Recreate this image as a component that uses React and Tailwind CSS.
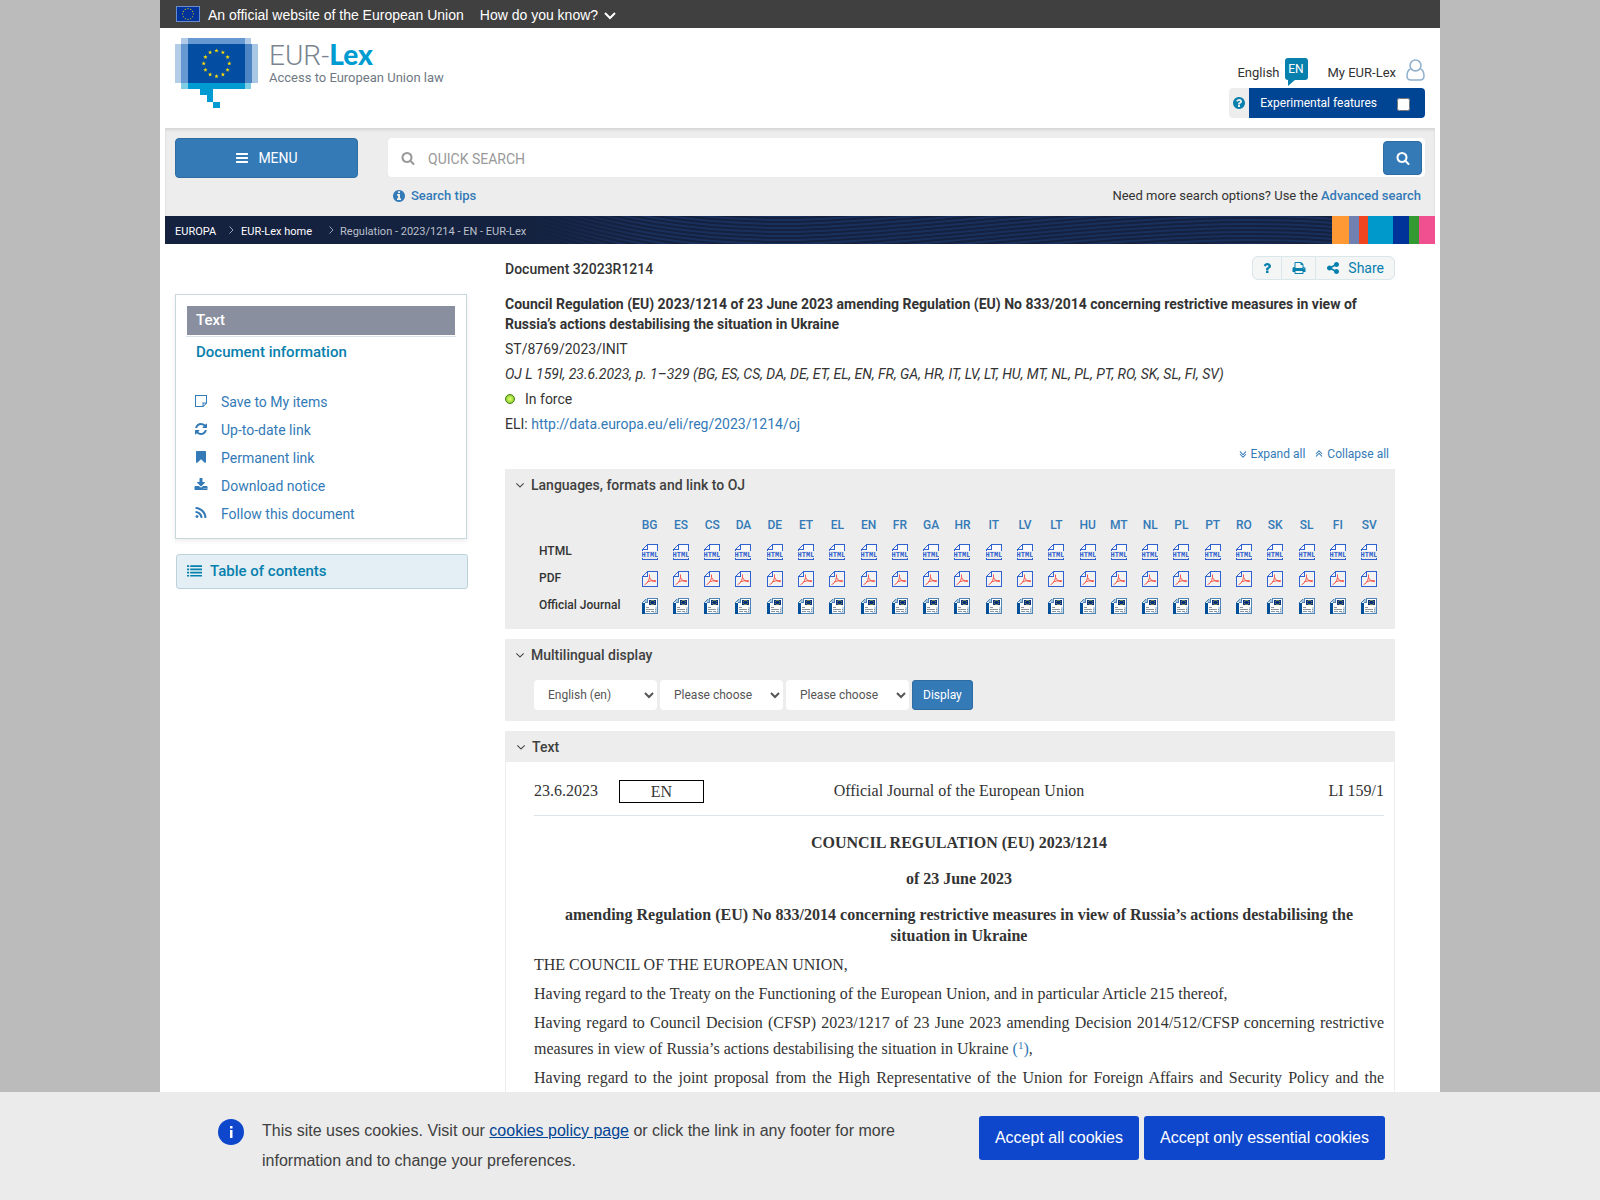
import React from 'react';

const LANGS = ['BG', 'ES', 'CS', 'DA', 'DE', 'ET', 'EL', 'EN', 'FR', 'GA', 'HR', 'IT', 'LV', 'LT', 'HU', 'MT', 'NL', 'PL', 'PT', 'RO', 'SK', 'SL', 'FI', 'SV'];

const DISC = 'm640 416q0 209-103 385.5t-279.5 279.5-385.5 103-385.5-103-279.5-279.5-103-385.5 103-385.5 279.5-279.5 385.5-103 385.5 103 279.5 279.5 103 385.5z';
const ANGLE_DOWN = 'M1395 736q0 13-10 23l-466 466q-10 10-23 10t-23-10l-466-466q-10-10-10-23t10-23l50-50q10-10 23-10t23 10l393 393 393-393q10-10 23-10t23 10l50 50q10 10 10 23z';

const PATHS = {
  bars: 'M1664 1344v128q0 26-19 45t-45 19h-1408q-26 0-45-19t-19-45v-128q0-26 19-45t45-19h1408q26 0 45 19t19 45zm0-512v128q0 26-19 45t-45 19h-1408q-26 0-45-19t-19-45v-128q0-26 19-45t45-19h1408q26 0 45 19t19 45zm0-512v128q0 26-19 45t-45 19h-1408q-26 0-45-19t-19-45v-128q0-26 19-45t45-19h1408q26 0 45 19t19 45z',
  search: 'M1216 832q0-185-131.5-316.5t-316.5-131.5-316.5 131.5-131.5 316.5 131.5 316.5 316.5 131.5 316.5-131.5 131.5-316.5zm512 832q0 52-38 90t-90 38q-54 0-90-38l-343-342q-179 124-399 124-143 0-273.5-55.5t-225-150-150-225-55.5-273.5 55.5-273.5 150-225 225-150 273.5-55.5 273.5 55.5 225 150 150 225 55.5 273.5q0 220-124 399l343 343q37 37 37 90z',
  info: 'M1152 1376v-160q0-14-9-23t-23-9h-96v-512q0-14-9-23t-23-9h-320q-14 0-23 9t-9 23v160q0 14 9 23t23 9h96v320h-96q-14 0-23 9t-9 23v160q0 14 9 23t23 9h448q14 0 23-9t9-23zm-128-896v-160q0-14-9-23t-23-9h-192q-14 0-23 9t-9 23v160q0 14 9 23t23 9h192q14 0 23-9t9-23z' + DISC,
  help: 'M1024 1376v-192q0-14-9-23t-23-9h-192q-14 0-23 9t-9 23v192q0 14 9 23t23 9h192q14 0 23-9t9-23zm256-672q0-88-55.5-163t-138.5-116-170-41q-243 0-371 213-15 24 8 42l132 100q7 6 19 6 16 0 25-12 53-68 86-92 34-24 86-24 48 0 85.5 26t37.5 59q0 38-20 61t-68 45q-63 28-115.5 86.5t-52.5 125.5v36q0 14 9 23t23 9h192q14 0 23-9t9-23q0-19 21.5-49.5t54.5-49.5q32-18 49-28.5t46-35 44.5-48 28-60.5 12.5-81zm384 192q0 209-103 385.5t-279.5 279.5-385.5 103-385.5-103-279.5-279.5-103-385.5 103-385.5 279.5-279.5 385.5-103 385.5 103 279.5 279.5 103 385.5z',
  refresh: 'M1639 1056q0 5-1 7-64 268-268 434.5t-478 166.5q-146 0-282.5-55t-243.5-157l-129 129q-19 19-45 19t-45-19-19-45v-448q0-26 19-45t45-19h448q26 0 45 19t19 45-19 45l-137 137q71 66 161 102t187 36q134 0 250-65t186-179q11-17 53-117 8-23 30-23h192q13 0 22.5 9.5t9.5 22.5zm25-800v448q0 26-19 45t-45 19h-448q-26 0-45-19t-19-45 19-45l138-138q-148-137-349-137-134 0-250 65t-186 179q-11 17-53 117-8 23-30 23h-199q-13 0-22.5-9.5t-9.5-22.5v-7q65-268 270-434.5t480-166.5q146 0 284 55.5t245 156.5l130-129q19-19 45-19t45 19 19 45z',
  bookmark: 'M1420 128q23 0 44 9 33 13 52.5 41t19.5 62v1289q0 34-19.5 62t-52.5 41q-19 8-44 8-48 0-83-32l-441-424-441 424q-36 33-83 33-23 0-44-9-33-13-52.5-41t-19.5-62v-1289q0-34 19.5-62t52.5-41q21-9 44-9h1048z',
  download: 'M1344 1344q0-26-19-45t-45-19-45 19-19 45 19 45 45 19 45-19 19-45zm256 0q0-26-19-45t-45-19-45 19-19 45 19 45 45 19 45-19 19-45zm128-224v320q0 40-28 68t-68 28h-1472q-40 0-68-28t-28-68v-320q0-40 28-68t68-28h465l135 136q58 56 136 56t136-56l136-136h464q40 0 68 28t28 68zm-325-569q17 41-14 70l-448 448q-18 19-45 19t-45-19l-448-448q-31-29-14-70 17-39 59-39h256v-448q0-26 19-45t45-19h256q26 0 45 19t19 45v448h256q42 0 59 39z',
  rss: 'M576 1344q0 80-56 136t-136 56-136-56-56-136 56-136 136-56 136 56 56 136zm512 123q2 28-17 48-18 21-47 21h-135q-25 0-43-16.5t-20-41.5q-22-229-184.5-391.5t-391.5-184.5q-25-2-41.5-20t-16.5-43v-135q0-29 21-47 17-17 43-17h5q160 13 306 80.5t259 181.5q114 113 181.5 259t80.5 306zm512 2q2 27-18 47-18 20-46 20h-143q-26 0-44.5-17.5t-19.5-42.5q-12-215-101-408.5t-231.5-336-336-231.5-408.5-102q-25-1-42.5-19.5t-17.5-43.5v-143q0-28 20-46 18-18 44-18h3q262 13 501.5 120t425.5 294q187 186 294 425.5t120 501.5z',
  share: 'M1344 1024q133 0 226.5 93.5t93.5 226.5-93.5 226.5-226.5 93.5-226.5-93.5-93.5-226.5q0-12 2-34l-360-180q-92 86-218 86-133 0-226.5-93.5t-93.5-226.5 93.5-226.5 226.5-93.5q126 0 218 86l360-180q-2-22-2-34 0-133 93.5-226.5t226.5-93.5 226.5 93.5 93.5 226.5-93.5 226.5-226.5 93.5q-126 0-218-86l-360 180q2 22 2 34t-2 34l360 180q92-86 218-86z',
  print: 'M448 1536h896v-256h-896v256zm0-640h896v-384h-160q-40 0-68-28t-28-68v-160h-640v640zm1152 64q0-26-19-45t-45-19-45 19-19 45 19 45 45 19 45-19 19-45zm128 0v416q0 13-9.5 22.5t-22.5 9.5h-224v160q0 40-28 68t-68 28h-960q-40 0-68-28t-28-68v-160h-224q-13 0-22.5-9.5t-9.5-22.5v-416q0-79 56.5-135.5t135.5-56.5h64v-544q0-40 28-68t68-28h672q40 0 88 20t76 48l152 152q28 28 48 76t20 88v256h64q79 0 135.5 56.5t56.5 135.5z',
  question: 'M1088 1256v240q0 16-12 28t-28 12h-240q-16 0-28-12t-12-28v-240q0-16 12-28t28-12h240q16 0 28 12t12 28zm316-600q0 54-15.5 101t-35 76.5-55 59.5-57.5 43.5-61 35.5q-41 23-68.5 65t-27.5 67q0 17-12 32.5t-28 15.5h-240q-15 0-25.5-18.5t-10.5-37.5v-45q0-83 65-156.5t143-108.5q59-27 84-56t25-76q0-42-46.5-74t-107.5-32q-65 0-108 29-35 25-107 115-13 16-31 16-12 0-25-8l-164-125q-13-10-15.5-25t5.5-28q160-266 464-266 80 0 161 31t146 83 106 127.5 41 158.5z',
  list: 'M0 1312h256v192h-256zm0-384h256v192h-256zm0-384h256v192h-256zm0-384h256v192h-256zm384 1152h1408v192h-1408zm0-384h1408v192h-1408zm0-384h1408v192h-1408zm0-384h1408v192h-1408z',
  note: 'M128 128h1536v1060l-476 476h-1060zm128 128v1280h832v-448h448v-832zm960 960v270l270-270z',
};

const Icon = ({ name, className = 'size-[14px]' }) => (
  <svg viewBox="0 0 1792 1792" fill="currentColor" className={`shrink-0 ${className}`} aria-hidden="true">
    <path fillRule="evenodd" d={PATHS[name]} />
  </svg>
);

const AngleDown = () => (
  <svg viewBox="0 0 1792 1792" fill="currentColor" className="size-[14px] shrink-0" aria-hidden="true">
    <path d={ANGLE_DOWN} />
  </svg>
);

const DoubleAngle = ({ up }) => (
  <svg viewBox="0 0 1792 1792" fill="currentColor" className={`size-3 shrink-0 ${up ? 'rotate-180' : ''}`} aria-hidden="true">
    <path d={ANGLE_DOWN} transform="translate(0 -160)" />
    <path d={ANGLE_DOWN} transform="translate(0 224)" />
  </svg>
);

// Ring of twelve stars, shared by the flag and the logo
const Stars = ({ cx, cy, r, size }) =>
  Array.from({ length: 12 }, (_, i) => {
    const a = (i * Math.PI) / 6;
    const x = cx + r * Math.sin(a);
    const y = cy - r * Math.cos(a);
    const pts = Array.from({ length: 10 }, (_, k) => {
      const b = (k * Math.PI) / 5;
      const s = k % 2 ? size * 0.4 : size;
      return `${x + s * Math.sin(b)},${y - s * Math.cos(b)}`;
    });
    return <polygon key={i} points={pts.join(' ')} fill="#ffdd00" />;
  });

const Logo = () => (
  <svg viewBox="0 0 83 70" className="h-[70px] w-[83px]" aria-hidden="true">
    <path fill="#b3cde8" d="M0 6h6v39H0z" />
    <path fill="#a7c7e5" d="M77 6h6v39h-6z" />
    <path fill="#b0cae7" d="M6 0h7v6H6zM70 0h6v6h-6z" />
    <path fill="#6699d2" d="M13 0h57v6H13zM6 6h7v39H6z" />
    <path fill="#4d85c5" d="M70 6h7v39h-7z" />
    <path fill="#034ea2" d="M13 6h57v39H13z" />
    <path fill="#80cde6" d="M6 45h7v6H6zM70 45h6v6h-6z" />
    <path fill="#009bd0" d="M13 45h57v6H13zM25 51h13v13h-6v-7h-7zM38 64h7v6h-7z" />
    <Stars cx={41.5} cy={25.5} r={12.8} size={2.3} />
  </svg>
);

const Flag = () => (
  <svg viewBox="0 0 24 16" className="h-4 w-6" aria-hidden="true">
    <rect width="24" height="16" fill="#6b8ccc" />
    <rect x="1" y="1" width="22" height="14" fill="#003399" />
    <Stars cx={12} cy={8} r={5.4} size={0.9} />
  </svg>
);

const HtmlIcon = () => (
  <svg viewBox="0 0 16 16" className="mx-auto block size-4" shapeRendering="crispEdges" aria-hidden="true">
    <path fill="#fafafa" d="M5 1h10v6H1V5z" />
    <path fill="#2f62cf" d="M5 0h11v7h-1V1H6v5H0v-1h5zM0 6h1v1H0zM2 3h1v1H2zM3 2h1v1H3zM1 4h1v1H1zM4 1h1v1H4zM0 14h1v1h14v-1h1v2H0z" />
    <text x="8" y="13" textAnchor="middle" fontSize="7" fontWeight="700" fill="#2f62cf" fontFamily="Liberation Mono, monospace">HTML</text>
  </svg>
);

const PdfIcon = () => (
  <svg viewBox="0 0 16 16" className="mx-auto block size-4" aria-hidden="true">
    <path fill="#f3f3f3" d="M5 1h10v14H1V5z" />
    <path fill="#2f62cf" shapeRendering="crispEdges" d="M5 0h11v16H0V5h1v10h14V1H6v5H1V5h4zM1 4h1v1H1zM2 3h1v1H2zM3 2h1v1H3zM4 1h1v1H4z" />
    <path fill="none" stroke="#f4564a" d="M7.500 3.500v3q-.5 3-2.500 5.500l-2.500 1.800M7.700 6.500q1 2.500 2.500 3.200M5.500 10.800q3-1.400 8-1.200v1q-2 .3-3.500-1" />
  </svg>
);

const JournalIcon = () => (
  <svg viewBox="0 0 16 16" className="mx-auto block size-4" shapeRendering="crispEdges" aria-hidden="true">
    <path fill="#fdfdfd" d="M5 1h10v14H3V5z" />
    <path fill="#c9d8e6" d="M13 9h2v6h-4v-1h2z" />
    <path fill="#4f86b8" d="M5 0h11v16H3v-1h12V1H6v4H3V4h2zM1 3h1v1H1zM3 1h1v1H3zM2 2h1v1H2zM0 4h1v1H0z" />
    <path fill="#a8c3dc" d="M2 3h3v1H2zM3 2h2v1H3zM4 1h1v1H4z" />
    <path fill="#004f98" d="M0 5h3v11H0z" />
    <path fill="#0a2f80" d="M7 2h7v5H7z" />
    <path fill="#6f8a50" d="M9 2h3v1H9zM8 3h1v1H8zM12 3h1v1h-1zM8 5h1v1H8zM12 5h1v1h-1zM9 6h3v1H9z" />
    <path fill="#8c979f" d="M4 9h3v1H4zM4 11h8v1H4zM4 13h4v1H4zM9 13h3v1H9zM13 11h1v1h-1zM13 13h1v1h-1z" />
  </svg>
);

const FORMATS = [
  { label: 'HTML', Glyph: HtmlIcon },
  { label: 'PDF', Glyph: PdfIcon },
  { label: 'Official Journal', Glyph: JournalIcon },
];

const TOOLS = [
  { label: 'Save to My items', icon: 'note' },
  { label: 'Up-to-date link', icon: 'refresh' },
  { label: 'Permanent link', icon: 'bookmark' },
  { label: 'Download notice', icon: 'download' },
  { label: 'Follow this document', icon: 'rss' },
];

const GlobalBar = () => (
  <div className="flex h-7 items-center bg-[#404040] px-4 font-['Liberation_Sans',sans-serif] text-sm text-white">
    <Flag />
    <span className="ml-2 pt-0.5">An official website of the European Union</span>
    <button type="button" className="ml-4 flex items-center gap-1.5 pt-0.5">
      How do you know?
      <svg viewBox="0 0 12 8" className="mt-0.5 h-2 w-3" fill="none" stroke="currentColor" strokeWidth="2" aria-hidden="true">
        <path d="M1 1l5 5 5-5" />
      </svg>
    </button>
  </div>
);

const Header = () => (
  <header className="flex h-[100px] items-start justify-between px-[15px] pt-[10px]">
    <a href="#home" className="flex gap-[11px]">
      <Logo />
      <span className="pt-0.5">
        <span className="block text-[28px] leading-[28px] font-light text-[#7a8490]">
          EUR-<span className="font-['Lato',sans-serif] font-black text-[#009bd0]">Lex</span>
        </span>
        <span className="block text-[13px] leading-4 text-[#6f7984]">Access to European Union law</span>
      </span>
    </a>
    <div className="flex flex-col items-end pt-5">
      <div className="flex h-[30px] items-start text-[13px] leading-[30px]">
        <a href="#language" className="flex gap-[5px]">
          English
          <span className="relative h-[22px] w-[23px] rounded-[3px] bg-[#0780ad] text-center text-xs leading-[22px] text-white">
            EN
            <svg viewBox="0 0 8 7" className="absolute top-[21px] left-[3px] h-[7px] w-2" fill="#0780ad" aria-hidden="true">
              <path d="M0 0h8L0 7z" />
            </svg>
          </span>
        </a>
        <a href="#account" className="ml-5 flex gap-[10px]">
          My EUR-Lex
          <svg viewBox="0 0 19 22" className="mt-px h-[22px] w-[19px]" fill="none" stroke="#8fb0cb" strokeWidth="1.5" aria-hidden="true">
            <circle cx="9.500" cy="6.500" r="5.500" />
            <path d="M4.500 10C2 11 1 13.500 1 17q0 4 4 4h9q4 0 4-4c0-3.500-1-6-3.500-7" />
          </svg>
        </a>
      </div>
      <div className="flex h-[30px] text-xs">
        <button type="button" aria-label="Help" className="flex w-5 items-center justify-center rounded-l-sm bg-[#ededed] text-[#0780ad]">
          <Icon name="help" />
        </button>
        <div className="flex items-center rounded-r bg-[#004494] pr-[15px] pl-[11px] text-white">
          <label htmlFor="experimental">Experimental features</label>
          <input id="experimental" type="checkbox" className="mt-[3px] ml-5 size-[13px]" />
        </div>
      </div>
    </div>
  </header>
);

const SearchBar = () => (
  <div className="flex gap-[30px] bg-[#ededed] px-[10px] pt-[10px] shadow-[inset_0_2px_3px_rgba(0,0,0,0.1)]">
    <button type="button" className="flex h-10 w-[183px] shrink-0 items-center justify-center gap-[9px] rounded border border-[#2e6da4] bg-[#337ab7] text-sm text-white">
      <Icon name="bars" />
      MENU
    </button>
    <form className="flex-1">
      <div className="flex h-[39px] items-center rounded bg-white pr-[3px] pl-[13px] text-[#999]">
        <Icon name="search" />
        <input type="text" aria-label="Quick search" placeholder="QUICK SEARCH" className="ml-[13px] min-w-0 flex-1 pt-0.5 text-sm outline-none placeholder:text-[#999]" />
        <button type="button" aria-label="Search" className="flex h-[34px] w-[39px] items-center justify-center rounded border border-[#2e6da4] bg-[#337ab7] text-white">
          <Icon name="search" />
        </button>
      </div>
      <div className="flex h-[39px] items-center justify-between px-1 pb-px text-[13px]">
        <a href="#tips" className="flex items-center gap-[5px] font-medium text-[#337ab7]">
          <Icon name="info" />
          Search tips
        </a>
        <span>
          Need more search options? Use the <a href="#advanced" className="font-medium text-[#337ab7]">Advanced search</a>
        </span>
      </div>
    </form>
  </div>
);

const CrumbArrow = () => (
  <svg viewBox="0 0 5 8" className="mb-1 h-2 w-[5px]" fill="none" stroke="#9aa3b5" aria-hidden="true">
    <path d="M.5.500l3.500 3.500-3.500 3.500" />
  </svg>
);

const Waves = () => (
  <svg viewBox="0 0 770 28" preserveAspectRatio="none" className="h-7 w-full" fill="none" stroke="#1a305c" strokeWidth="2" aria-hidden="true">
    <defs>
      <linearGradient id="fade">
        <stop offset="0" stopColor="#14213f" />
        <stop offset="0.15" stopColor="#14213f" stopOpacity="0" />
      </linearGradient>
    </defs>
    {Array.from({ length: 26 }, (_, i) => (
      <path key={i} d={`M0 ${i * 4 - 42}C90 ${i * 4 - 12} 160 ${i * 4} 250 ${i * 4}S560 ${i * 4 - 32} 690 ${i * 4 - 32}Q740 ${i * 4 - 32} 770 ${i * 4 - 29}`} />
    ))}
    <rect width="770" height="28" fill="url(#fade)" stroke="none" />
  </svg>
);

const Breadcrumb = () => (
  <nav aria-label="Breadcrumb" className="flex h-7 bg-[#14213f] text-[11px] text-white">
    <ol className="flex shrink-0 items-center pt-1 pl-[10px]">
      <li><a href="#europa">EUROPA</a></li>
      <li className="ml-[13px] flex items-center gap-[7px]"><CrumbArrow /><a href="#home">EUR-Lex home</a></li>
      <li className="ml-[17px] flex items-center gap-[6px] text-[#bbc0cb]"><CrumbArrow />Regulation - 2023/1214 - EN - EUR-Lex</li>
    </ol>
    <div className="min-w-0 flex-1"><Waves /></div>
    <div className="flex shrink-0" aria-hidden="true">
      <span className="w-[17px] bg-[#ff9933]" />
      <span className="w-[10px] bg-[#7081b1]" />
      <span className="w-[9px] bg-[#f0451e]" />
      <span className="w-[25px] bg-[#0099cc]" />
      <span className="w-[16px] bg-[#003399]" />
      <span className="w-[10px] bg-[#339933]" />
      <span className="w-4 bg-[#f05090]" />
    </div>
  </nav>
);

const Sidebar = () => (
  <aside className="w-[292px] shrink-0 pt-[50px]">
    <div className="border border-[#c8d8de] px-[10px] pt-[11px] pb-[10px] shadow-[0_2px_5px_rgba(0,0,0,0.08)]">
      <div className="border-b border-[#d9e3ea] px-px pb-px">
        <a href="#text" className="block bg-[#8a8f9f] pl-[9px] text-[15px] leading-[29px] font-medium text-white">Text</a>
      </div>
      <a href="#information" className="block pl-[10px] text-[15px] leading-[31px] font-medium text-[#0780ad]">Document information</a>
      <ul className="mt-5 text-sm leading-7 text-[#337ab7]">
        {TOOLS.map(({ label, icon }) => (
          <li key={label}>
            <a href="#tool" className="flex items-center gap-[13px] pl-2">
              <Icon name={icon} className="mb-0.5 size-[14px]" />
              {label}
            </a>
          </li>
        ))}
      </ul>
    </div>
    <button type="button" className="mt-[15px] ml-px flex h-[35px] w-full items-center gap-2 rounded-[3px] border border-[#bdd1db] bg-[#e3eff4] pl-[10px] text-[15px] font-medium text-[#0780ad]">
      <Icon name="list" className="size-[15px]" />
      Table of contents
    </button>
  </aside>
);

const PanelHeading = ({ children }) => (
  <h2>
    <button type="button" className="flex h-[31px] items-center gap-1 pl-2 text-sm font-medium text-[#404040]">
      <AngleDown />
      {children}
    </button>
  </h2>
);

const Summary = () => (
  <section className="text-sm leading-5">
    <div className="flex h-[49px] items-start justify-between">
      <p className="pt-[15px] font-medium">Document 32023R1214</p>
      <div className="mt-3 flex h-6 text-[#0780ad]">
        <button type="button" aria-label="Help" className="flex w-[30px] items-center justify-center rounded-l-md border border-[#d9e6ea] bg-[#f4f5f5]">
          <Icon name="question" />
        </button>
        <button type="button" aria-label="Print" className="flex w-[33px] items-center justify-center border-y border-[#d9e6ea] bg-[#f4f5f5]">
          <Icon name="print" />
        </button>
        <button type="button" className="flex items-center gap-2 rounded-r-md border border-[#d9e6ea] bg-[#f4f5f5] px-[10px]">
          <Icon name="share" />
          Share
        </button>
      </div>
    </div>
    <h1 className="pt-px font-bold">
      Council Regulation (EU) 2023/1214 of 23 June 2023 amending Regulation (EU) No 833/2014 concerning restrictive measures in view of Russia’s actions destabilising the situation in Ukraine
    </h1>
    <p className="mt-[5px]">ST/8769/2023/INIT</p>
    <p className="mt-[5px] italic">OJ L 159I, 23.6.2023, p. 1–329 (BG, ES, CS, DA, DE, ET, EL, EN, FR, GA, HR, IT, LV, LT, HU, MT, NL, PL, PT, RO, SK, SL, FI, SV)</p>
    <p className="mt-[5px] flex items-center gap-[10px]">
      <span className="size-[10px] rounded-full border border-[#4a7a10] bg-radial from-[#e8ff70] to-[#5cc400]" />
      In force
    </p>
    <p className="mt-[5px]">
      ELI: <a href="#eli" className="text-[#337ab7]">http://data.europa.eu/eli/reg/2023/1214/oj</a>
    </p>
    <div className="flex h-[35px] items-center justify-end gap-2 pt-1 pr-[6px] text-xs text-[#337ab7]">
      <button type="button" className="flex items-center gap-0.5"><DoubleAngle />Expand all</button>
      <button type="button" className="flex items-center gap-0.5"><DoubleAngle up />Collapse all</button>
    </div>
  </section>
);

const LanguagePanel = () => (
  <section className="bg-[#ededed] pb-[10px]">
    <PanelHeading>Languages, formats and link to OJ</PanelHeading>
    <div className="pt-[11px] pr-[10px] pl-[29px]">
      <table className="w-full table-fixed text-xs">
        <thead>
          <tr className="h-[27px]">
            <td className="w-[100px]" />
            {LANGS.map((l) => (
              <th key={l} scope="col" className="font-medium"><a href="#lang" className="text-[#337ab7]">{l}</a></th>
            ))}
          </tr>
        </thead>
        <tbody>
          {FORMATS.map(({ label, Glyph }) => (
            <tr key={label} className="h-[27px]">
              <th scope="row" className="pb-0.5 pl-[5px] text-left font-medium whitespace-nowrap">{label}</th>
              {LANGS.map((l) => (
                <td key={l}><a href="#doc" aria-label={`${label} ${l}`}><Glyph /></a></td>
              ))}
            </tr>
          ))}
        </tbody>
      </table>
    </div>
  </section>
);

const DisplaySelect = ({ label, value }) => (
  <select aria-label={label} className="h-[30px] w-[123px] rounded bg-white pl-[10px] text-xs text-[#555]">
    <option>{value}</option>
  </select>
);

const MultilingualPanel = () => (
  <section className="mt-[10px] bg-[#ededed] pb-[11px]">
    <PanelHeading>Multilingual display</PanelHeading>
    <form className="flex gap-[3px] pt-[10px] pl-[29px]">
      <DisplaySelect label="Language 1" value="English (en)" />
      <DisplaySelect label="Language 2" value="Please choose" />
      <DisplaySelect label="Language 3" value="Please choose" />
      <button type="button" className="h-[30px] rounded-[3px] border border-[#2e6da4] bg-[#337ab7] px-[10px] text-xs text-white">Display</button>
    </form>
  </section>
);

const TextPanel = () => (
  <section className="mt-[10px] border-x border-[#ededed]">
    <div className="bg-[#ededed]">
      <PanelHeading>Text</PanelHeading>
    </div>
    <article className="pr-[10px] pb-10 pl-7 font-['Liberation_Serif',serif] text-base">
      <div className="grid grid-cols-[1fr_auto_1fr] items-center border-b border-[#dbe6ea] pt-[17px] pb-3">
        <div className="flex items-center gap-[21px]">
          23.6.2023
          <span className="w-[85px] border border-black text-center leading-[21px]">EN</span>
        </div>
        <span>Official Journal of the European Union</span>
        <span className="text-right">LI 159/1</span>
      </div>
      <div className="mt-4 space-y-[15px] text-center leading-[21px] font-bold">
        <p>COUNCIL REGULATION (EU) 2023/1214</p>
        <p>of 23 June 2023</p>
        <p>amending Regulation (EU) No 833/2014 concerning restrictive measures in view of Russia’s actions destabilising the situation in Ukraine</p>
      </div>
      <div className="mt-[6px] space-y-[3px] text-justify leading-[26px]">
        <p>THE COUNCIL OF THE EUROPEAN UNION,</p>
        <p>Having regard to the Treaty on the Functioning of the European Union, and in particular Article 215 thereof,</p>
        <p>
          Having regard to Council Decision (CFSP) 2023/1217 of 23 June 2023 amending Decision 2014/512/CFSP concerning restrictive measures in view of Russia’s actions destabilising the situation in Ukraine <a href="#note1" className="text-[#337ab7]">(<sup className="text-[11px]">1</sup>)</a>,
        </p>
        <p className="[text-align-last:justify]">
          Having regard to the joint proposal from the High Representative of the Union for Foreign Affairs and Security Policy and the
        </p>
      </div>
    </article>
  </section>
);

const CookieBanner = () => (
  <div className="fixed inset-x-0 bottom-0 bg-[#ebebeb] font-['Liberation_Sans',sans-serif] text-base text-[#404040]">
    <div className="mx-auto flex max-w-[1200px] items-start justify-between px-[15px] pt-6 pb-6">
      <div className="flex items-start gap-[18px]">
        <svg viewBox="0 0 26 26" className="mt-[3px] ml-[3px] size-[26px] shrink-0" aria-hidden="true">
          <circle cx="13" cy="13" r="13" fill="#0e47cb" />
          <path fill="#fff" d="M12 11h2.500v8H12zM12 7h2.500v2.500H12z" />
        </svg>
        <p className="max-w-[660px] leading-[30px]">
          This site uses cookies. Visit our <a href="#cookies" className="text-[#004494] underline">cookies policy page</a> or click the link in any footer for more information and to change your preferences.
        </p>
      </div>
      <div className="flex shrink-0 gap-[5px] text-white">
        <button type="button" className="h-11 rounded-[3px] bg-[#0e47cb] px-4">Accept all cookies</button>
        <button type="button" className="h-11 rounded-[3px] bg-[#0e47cb] px-4">Accept only essential cookies</button>
      </div>
    </div>
  </div>
);

export default function App() {
  return (
    <div className="min-h-screen bg-[#bbb] font-['Roboto',sans-serif] text-[#333]">
      <div className="mx-auto min-h-screen max-w-[1280px] bg-white">
        <GlobalBar />
        <Header />
        <div className="px-[5px]">
          <SearchBar />
          <Breadcrumb />
        </div>
        <div className="flex gap-[38px] pr-[45px] pl-[15px]">
          <Sidebar />
          <main className="min-w-0 flex-1">
            <Summary />
            <LanguagePanel />
            <MultilingualPanel />
            <TextPanel />
          </main>
        </div>
      </div>
      <CookieBanner />
    </div>
  );
}
